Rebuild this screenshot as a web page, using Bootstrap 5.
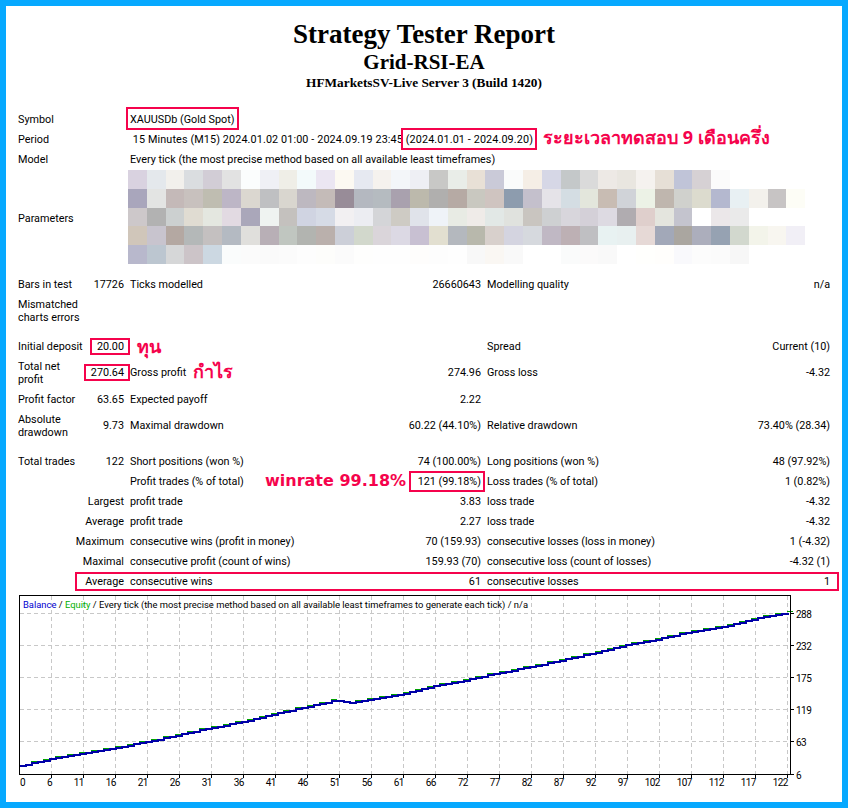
<!DOCTYPE html>
<html lang="en">
<head>
<meta charset="UTF-8" />
<title>Strategy Tester Report</title>
<link href="https://cdn.jsdelivr.net/npm/bootstrap@5.3.0/dist/css/bootstrap.min.css" rel="stylesheet">
<style>
    body { margin: 0; background: #fff; }
    .report-frame {
      width: 848px; height: 808px;
      border: 6px solid #06a9ff;
      background: #fff; color: #000;
      font-family: Roboto, sans-serif;
      font-size: 11px;
      overflow: hidden;
    }
    .report-head { height: 103px; padding-top: 12px; font-family: "Liberation Serif", serif; font-weight: 700; line-height: 1; }
    .report-head h1 { font-size: 27px; font-weight: 700; margin: 0; line-height: 32px; }
    .report-head h2 { font-size: 21px; font-weight: 700; margin: 0; line-height: 25px; }
    .report-head h3 { font-size: 13.3px; font-weight: 700; margin: 0; line-height: 15px; }
    .report-table { width: 816px; margin: 0 0 0 10px; table-layout: fixed; line-height: 13px; font-size: 10.8px; }
    .report-table > tbody > tr > td { padding: 0 2px; vertical-align: middle; background: transparent; color: #000; white-space: normal; }
    .report-table > tbody > tr > td.text-end { padding-right: 4px; }
    .report-table > tbody > tr > td.text-end:last-child { padding-right: 2px; }
    .report-table > tbody > tr > td.param-label { padding-top: 2px; }
    .report-table tr { height: 20px; }
    .report-table tr.wrap-row { height: 33px; }
    .report-table tr.gap-row { height: 9px; }
    .report-table tr.param-row { height: 96px; }
    .report-table td.nowrap-cell { white-space: nowrap; }
    .report-table td.period-cell { letter-spacing: .12px; }
    .blur-grid { display: block; width: 678px; height: 94px; margin: 1px 0 1px -2px; }
    .mark-box { position: absolute; border: 2px solid #f5034c; }
    .mark-note { position: absolute; color: #f5034c; font-weight: 700; white-space: nowrap; line-height: 1; }
    .note-th { font-family: "Noto Sans", "DejaVu Sans", sans-serif; font-size: 18px; }
    .note-en { font-family: "DejaVu Sans", sans-serif; font-size: 16px; }
    .chart-svg { display: block; width: 836px; height: 202px; margin-top: 3px; }
    .chart-svg text { font-family: Roboto, sans-serif; font-size: 9.4px; fill: #000; }
    .chart-svg #chartLabels text { font-size: 10px; letter-spacing: -.5px; }
</style>
</head>
<body>
<div class="report-frame position-relative">
    <div class="report-head text-center">
        <h1>Strategy Tester Report</h1>
        <h2>Grid-RSI-EA</h2>
        <h3>HFMarketsSV-Live Server 3 (Build 1420)</h3>
    </div>

    <table class="table table-borderless report-table mb-0">
        <colgroup>
            <col style="width:68px"><col style="width:44px"><col style="width:182px"><col style="width:175px"><col style="width:135px"><col style="width:212px">
        </colgroup>
        <tbody>
            <tr><td>Symbol</td><td></td><td colspan="4">XAUUSDb (Gold Spot)</td></tr>
            <tr><td>Period</td><td></td><td colspan="4" class="nowrap-cell period-cell">&nbsp;15 Minutes (M15) 2024.01.02 01:00 - 2024.09.19 23:45 (2024.01.01 - 2024.09.20)</td></tr>
            <tr><td>Model</td><td></td><td colspan="4" class="nowrap-cell">Every tick (the most precise method based on all available least timeframes)</td></tr>
            <tr class="param-row"><td class="param-label">Parameters</td><td></td><td colspan="4"><svg class="blur-grid" id="blurGrid" viewBox="0 0 678 94" shape-rendering="crispEdges"></svg></td></tr>
            <tr class="gap-row"><td colspan="6"></td></tr>
            <tr><td class="nowrap-cell">Bars in test</td><td class="text-end">17726</td><td>Ticks modelled</td><td class="text-end">26660643</td><td>Modelling quality</td><td class="text-end">n/a</td></tr>
            <tr class="wrap-row"><td colspan="2"><div style="width:80px">Mismatched charts errors</div></td><td colspan="4"></td></tr>
            <tr class="gap-row"><td colspan="6"></td></tr>
            <tr><td class="nowrap-cell">Initial deposit</td><td class="text-end">20.00</td><td></td><td></td><td>Spread</td><td class="text-end">Current (10)</td></tr>
            <tr class="wrap-row"><td>Total net profit</td><td class="text-end">270.64</td><td>Gross profit</td><td class="text-end">274.96</td><td>Gross loss</td><td class="text-end">-4.32</td></tr>
            <tr><td class="nowrap-cell">Profit factor</td><td class="text-end">63.65</td><td>Expected payoff</td><td class="text-end">2.22</td><td></td><td></td></tr>
            <tr class="wrap-row"><td>Absolute drawdown</td><td class="text-end">9.73</td><td>Maximal drawdown</td><td class="text-end">60.22 (44.10%)</td><td>Relative drawdown</td><td class="text-end">73.40% (28.34)</td></tr>
            <tr class="gap-row"><td colspan="6"></td></tr>
            <tr><td class="nowrap-cell">Total trades</td><td class="text-end">122</td><td>Short positions (won %)</td><td class="text-end">74 (100.00%)</td><td class="nowrap-cell">Long positions (won %)</td><td class="text-end">48 (97.92%)</td></tr>
            <tr><td colspan="2"></td><td>Profit trades (% of total)</td><td class="text-end">121 (99.18%)</td><td class="nowrap-cell">Loss trades (% of total)</td><td class="text-end">1 (0.82%)</td></tr>
            <tr><td colspan="2" class="text-end">Largest</td><td>profit trade</td><td class="text-end">3.83</td><td>loss trade</td><td class="text-end">-4.32</td></tr>
            <tr><td colspan="2" class="text-end">Average</td><td>profit trade</td><td class="text-end">2.27</td><td>loss trade</td><td class="text-end">-4.32</td></tr>
            <tr><td colspan="2" class="text-end">Maximum</td><td class="nowrap-cell">consecutive wins (profit in money)</td><td class="text-end">70 (159.93)</td><td class="nowrap-cell">consecutive losses (loss in money)</td><td class="text-end">1 (-4.32)</td></tr>
            <tr><td colspan="2" class="text-end">Maximal</td><td class="nowrap-cell">consecutive profit (count of wins)</td><td class="text-end">159.93 (70)</td><td class="nowrap-cell">consecutive loss (count of losses)</td><td class="text-end">-4.32 (1)</td></tr>
            <tr><td colspan="2" class="text-end">Average</td><td>consecutive wins</td><td class="text-end">61</td><td>consecutive losses</td><td class="text-end">1</td></tr>
        </tbody>
    </table>

    <svg class="chart-svg" id="chart" viewBox="6 594 836 202">
        <g id="chartGrid" stroke="#c8c8c8" stroke-dasharray="4 3" shape-rendering="crispEdges"></g>
        <g id="chartTicks" stroke="#000" shape-rendering="crispEdges"></g>
        <g id="chartEquity" fill="none" stroke="#00a000" stroke-width="1" shape-rendering="crispEdges"></g>
        <path id="chartBalance" fill="none" stroke="#0000a8" stroke-width="2" shape-rendering="crispEdges"/>
        <rect x="19.5" y="595.5" width="771" height="179" fill="none" stroke="#000" shape-rendering="crispEdges"/>
        <text x="23" y="607.5"><tspan style="fill:#0000d0">Balance</tspan> / <tspan style="fill:#00b000">Equity</tspan> / Every tick (the most precise method based on all available least timeframes to generate each tick) / n/a</text>
        <g id="chartLabels"></g>
    </svg>

    <!-- annotations drawn on top of the report, coordinates are frame relative -->
    <div class="mark-box" style="left:120px;top:101px;width:113px;height:23px"></div>
    <div class="mark-box" style="left:395px;top:122px;width:136px;height:22px"></div>
    <div class="mark-box" style="left:84px;top:332px;width:40px;height:17px"></div>
    <div class="mark-box" style="left:78px;top:358px;width:46px;height:17px"></div>
    <div class="mark-box" style="left:403px;top:465px;width:76px;height:21px"></div>
    <div class="mark-box" style="left:69px;top:566px;width:764px;height:19px"></div>
    <div class="mark-note note-th" style="left:537px;top:122px">ระยะเวลาทดสอบ 9 เดือนครึ่ง</div>
    <div class="mark-note note-th" style="left:131px;top:331px">ทุน</div>
    <div class="mark-note note-th" style="left:187px;top:356px">กำไร</div>
    <div class="mark-note note-en" style="left:259px;top:467px">winrate 99.18%</div>
</div>

<script src="https://cdn.jsdelivr.net/npm/bootstrap@5.3.0/dist/js/bootstrap.bundle.min.js"></script>
<script>
    const NS = 'http://www.w3.org/2000/svg';
    function add(parent, tag, attrs, text) {
      const el = document.createElementNS(NS, tag);
      for (const k in attrs) el.setAttribute(k, attrs[k]);
      if (text !== undefined) el.textContent = text;
      parent.appendChild(el);
      return el;
    }

    // pixelated parameter block
    const blur = [
      'd9d2e0 e4e8ec f2f0ec dadde0 d2cdd6 e2e2e2 fbfdfd eff0f5 efeee7 f3fafb ebe6f2 fcf9f2 e6e9f1 f5f2ee f3f6f9 eeeff4 c8c8c6 e9ede8 e8e0d6 cacad8 fafbfb f5eee6 d6d7e6 c4c8c9 dadada ede9e5 e9e6e0 f5f2ef e6dfd6 c0c4d8 d6d1d4 fbfbfb',
      'a9a6bc e3e4e3 c4b9b8 c8c1be bfbdb1 bdb6c6 dbd7d0 bfc0c2 d9d6cf bdb8c0 c4bbb8 988c98 b4b8c0 b5bbc0 a9a1ae bcb9ac b0afae b6aaa4 c9c8c0 cfc4c0 8d9cae c4c0cc e5e3e8 d4dde3 e3e6dc c8bcb3 d0d3d8 ecf2e6 bfb6ae d0d1cd dcdbce b4b8cf e8f0f3 f3f1ec c7c4c4 fdfdf6',
      'cdc8ca b2b2b2 ccd0d0 e0dcd2 e4e7e0 e2dae2 aaa7ba eff3f1 c4c1be d0d4e2 d6dbe6 f2f0f2 ecedf2 d4d5d8 cecbc4 e0e3ea eff3f8 e8ebe4 efebe8 e2e8e6 e0e2de c9c5c0 ced0d2 d8d6dc d4d0d8 dddae2 b0acb0 dfcfcc e4e5de c4c4ce ffffff ebe7e9 eaeaea',
      'd0c6ba c8c4ce b4a8a2 b4b8b8 c4c0c0 b4bac2 e0dfdc b8afb6 c0c6c0 b2b4b0 bab0ac cccfd8 d2d8cc dad5da dcd9e4 c8c0d2 e2dfd0 b4b8be b8b8ac d8d0cc d4d4e0 d6d9de c0b8c4 bdb0b4 bfbfc2 e8f2f2 e8f0f0 e6d9d6 a2a8b8 aaa6a0 acaebc 96a2b2 d2d8ce f3f4ea f8f6f0 f1eff6',
      'b8b8cc bcc6d0 d6d7d8 ccc4c8 ccd8e2 fafcfc fbfbfb fafafa fbfbfb fdfdfd fdfdfb fbfbfb fefefd fefefe fefefe fefdfc fdfdfd fefefe f8f8f8 faf7f3 f9f9f9 ffffff ffffff fafbfb fbfafa f9f9f9 ffffff fffffd fffefc f9f9fc fcfcfc fbfbfb f7f7f7'
    ];
    const blurGrid = document.getElementById('blurGrid');
    blur.forEach((line, r) => line.split(' ').forEach((c, i) => {
      add(blurGrid, 'rect', {x: i * 18.8125, y: r * 18.8, width: 18.9, height: 18.9, fill: '#' + c});
    }));

    // chart
    const grid = document.getElementById('chartGrid');
    const ticks = document.getElementById('chartTicks');
    const labels = document.getElementById('chartLabels');
    const xNames = ['0','6','11','16','21','26','31','36','41','46','51','56','61','66','72','77','82','87','92','97','102','107','112','117','122'];
    xNames.forEach((name, i) => {
      const x = 19.5 + i * 32;
      if (i > 0) {
        add(grid, 'line', {x1: x, y1: 596, x2: x, y2: 774});
        add(ticks, 'line', {x1: x, y1: 774, x2: x, y2: 778});
      }
      add(labels, 'text', {x: i === 0 ? 20 : x + 0.5, y: 786, 'text-anchor': i === 0 ? 'start' : 'end'}, name);
    });
    [[613.5,'288'],[645.5,'232'],[677.5,'175'],[709.5,'119'],[741.5,'63'],[774,'6']].forEach(([y, name]) => {
      if (y < 774) add(grid, 'line', {x1: 20, y1: y, x2: 790, y2: y});
      add(ticks, 'line', {x1: 790, y1: y, x2: 794, y2: y});
      add(labels, 'text', {x: 796, y: y + 4.5}, name);
    });

    const curve = [[20,766],[51,759],[83,754],[115,748],[147,742],[179,735],[211,728],[243,722],[275,714],[307,707],[335,700.5],[341,700.5],[347,703],[353,703],[371,699],[403,694],[424,689],[435,686],[467,680],[499,673],[531,667],[563,660],[595,653],[627,645],[659,639],[691,632],[723,627],[755,619],[788,613]];
    function curveY(x) {
      for (let i = 1; i < curve.length; i++) {
        if (x <= curve[i][0]) {
          const [x0, y0] = curve[i - 1], [x1, y1] = curve[i];
          return y0 + (y1 - y0) * (x - x0) / (x1 - x0);
        }
      }
      return 613;
    }
    let d = 'M20 766', prevY = 766;
    const equity = document.getElementById('chartEquity');
    for (let x = 26; x <= 788; x += 6) {
      const y = Math.round(curveY(x));
      d += ' H' + x + ' V' + y;
      if (y < prevY && x % 4 === 0) add(equity, 'line', {x1: x - 1, y1: y - 1.5, x2: x + 5, y2: y - 1.5});
      prevY = y;
    }
    d += ' H788';
    document.getElementById('chartBalance').setAttribute('d', d);
</script>
</body>
</html>
